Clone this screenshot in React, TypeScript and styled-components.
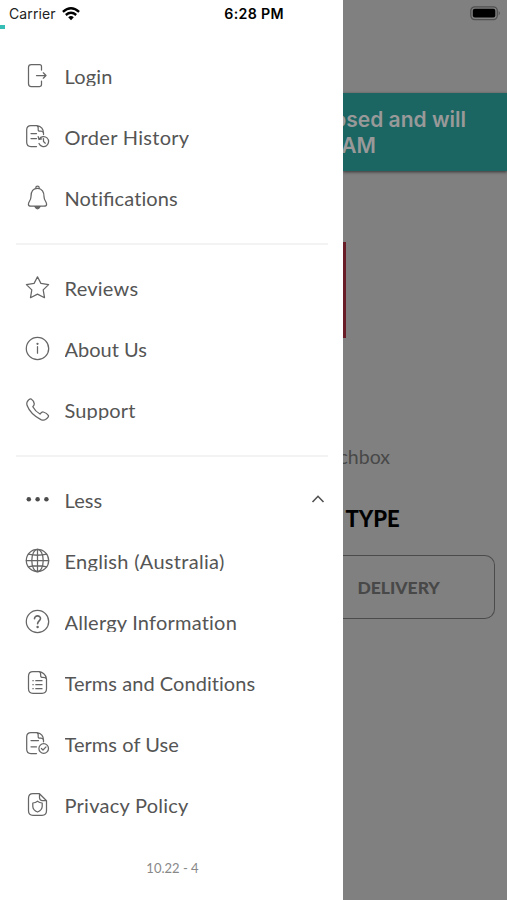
import React from "react";
import styled, { createGlobalStyle } from "styled-components";

const GlobalStyle = createGlobalStyle`
  * { box-sizing: border-box; }
  body { margin: 0; background: #fff; }
`;

const Screen = styled.div`
  display: flex;
  width: 507px;
  height: 900px;
  overflow: hidden;
  font-family: Lato, sans-serif;
`;

const Drawer = styled.aside`
  width: 343px;
  height: 900px;
  background: #fff;
  display: flex;
  flex-direction: column;
  flex: none;
`;

const StatusBar = styled.header`
  height: 25px;
  display: flex;
  align-items: center;
  padding: 3px 0 0 9px;
  font-family: Inter, sans-serif;
  line-height: 20px;
  color: #222;
`;

const Carrier = styled.span`
  width: 53px;
  font-size: 14px;
  letter-spacing: 0.1px;
`;

const Clock = styled.span`
  margin-left: auto;
  margin-right: 59px;
  font-weight: 600;
  font-size: 14.2px;
  letter-spacing: 0.35px;
  color: #000;
  white-space: nowrap;
`;

const Progress = styled.div`
  width: 4.5px;
  height: 4px;
  background: #36bdb5;
`;

const Menu = styled.nav`
  padding-top: 16px;
`;

const Row = styled.div`
  height: 61.1px;
  display: flex;
  align-items: center;
  padding: 0 17px 0 25px;
`;

const Glyph = styled.svg`
  width: 25px;
  height: 25px;
  flex: none;
  fill: none;
  stroke: #666;
  stroke-width: 1.25;
  stroke-linecap: round;
  stroke-linejoin: round;
`;

const Label = styled.span<{ $clip?: boolean; $tracking: number }>`
  margin-left: 14.5px;
  font-size: 20px;
  line-height: 24px;
  height: ${(p) => (p.$clip ? "22px" : "26px")};
  margin-top: ${(p) => (p.$clip ? "-1px" : "3px")};
  letter-spacing: ${(p) => p.$tracking}px;
  overflow: hidden;
  white-space: nowrap;
  color: #555;
`;

const Ligature = styled.span`
  letter-spacing: 0;
`;

const Chevron = styled.svg`
  width: 14px;
  height: 10px;
  margin-left: auto;
  margin-right: 1px;
  fill: none;
  stroke: #505050;
  stroke-width: 1.6;
`;

const Divider = styled.hr`
  height: 2px;
  margin: 14.7px 15px 12px 16px;
  border: 0;
  background: #f3f3f3;
`;

const Version = styled.footer`
  margin-top: 23px;
  padding-left: 2px;
  text-align: center;
  font-size: 13px;
  line-height: 18px;
  color: #888;
`;

const Page = styled.main`
  width: 164px;
  height: 900px;
  background: #808080;
  display: flex;
  flex-direction: column;
  overflow: hidden;
`;

const PageStatus = styled.div`
  height: 93px;
  display: flex;
  justify-content: flex-end;
  padding: 6px 6px 0 0;
`;

const Banner = styled.div`
  height: 78px;
  flex: none;
  padding: 14px 41px 0 0;
  background: #1b6663;
  box-shadow: 0 1px 3px rgba(0, 0, 0, 0.6);
  display: flex;
  flex-direction: column;
  align-items: flex-end;
  font-family: Inter, sans-serif;
  font-size: 21px;
  font-weight: 600;
  line-height: 26px;
  color: #999;
  white-space: nowrap;
`;

const BannerEnd = styled.span`
  margin-right: 90px;
`;

const LogoEdge = styled.div`
  width: 3px;
  height: 96px;
  margin-top: 71px;
  flex: none;
  background: #681c26;
`;

const StoreName = styled.div`
  display: flex;
  justify-content: flex-end;
  margin-top: 106px;
  padding-right: 117px;
  font-size: 19.5px;
  line-height: 26px;
  color: #484848;
`;

const Heading = styled.h2`
  margin: 34px 0 0 2.5px;
  font-size: 22px;
  font-weight: 900;
  line-height: 30px;
  color: #000;
`;

const DeliveryButton = styled.button`
  width: 152px;
  height: 64px;
  margin-top: 21px;
  padding: 0 0 0 14.5px;
  border: 1.5px solid #4b4b4b;
  border-left: 0;
  border-radius: 0 10px 10px 0;
  background: transparent;
  text-align: left;
  font: 900 17.5px Lato, sans-serif;
  color: #484848;
`;

type IconName = "login" | "history" | "bell" | "star" | "info" | "phone" | "more" | "globe" | "help" | "terms" | "use" | "privacy";

const icons: Record<IconName, React.ReactNode> = {
  login: <path d="M16.5 7V3.4Q16.5 1.5 14.6 1.5H6.3Q3.5 1.5 3.5 4.3V20.7Q3.5 23.5 6.3 23.5H14.6Q16.5 23.5 16.5 21.6V18M11.5 12.5H21M18.3 9.8L21 12.5L18.3 15.2" />,
  history: (
    <>
      <path d="M11.5 22.5H6Q1.7 22.5 1.7 18.2V5.8Q1.7 1.5 6 1.5H12Q18.5 3 18.5 9V10.5M12 1.7Q13.7 3 13.2 5.2Q12.8 7.4 15.3 7.2Q17.8 7 18.5 9M6 9.5H11.5M6 14.5H11.5" />
      <path d="M14.3 15A5 5 0 1 1 14 19.5M13.2 12.7L14 15.5L16.8 14.8M18.5 14.6V17.5L20.3 19.2" />
    </>
  ),
  bell: (
    <>
      <path d="M10.8 3.6V2.8A1.7 1.7 0 0 1 14.2 2.8V3.6M12.5 3.3C7.8 3.3 6 7.2 6 11.4C6 15.5 3.4 16.6 3.4 19.2Q3.4 21.2 6 21.2H19Q21.6 21.2 21.6 19.2C21.6 16.6 19 15.5 19 11.4C19 7.2 17.2 3.3 12.5 3.3Z" />
      <path d="M9.8 21.5Q12.5 26 15.2 21.5Z" fill="#666" />
    </>
  ),
  star: <path d="M12.5 1.8L15.9 8.4L23.6 9.6L18.2 14.9L19.5 22.7L12.5 19.1L5.5 22.7L6.8 14.9L1.4 9.6L9.1 8.4Z" />,
  info: (
    <>
      <circle cx="12.5" cy="12.5" r="11.2" />
      <path d="M12.5 10.7V17.2" />
      <circle cx="12.5" cy="7.8" r=".5" fill="#666" />
    </>
  ),
  phone: <path d="M2 5.2Q4 1.5 6.2 2Q8.7 3.6 9.3 6.8Q9.3 8.3 7.8 9.8C9 12 12.4 15.7 15 17Q17 14.7 18.3 15Q21.8 15.8 23.5 18.6Q24 20 20.5 22.6Q18.8 23.8 15.9 22.6C9.5 19.5 4.2 14 2.1 8.6Q1.5 6.6 2 5.2Z" />,
  more: (
    <g fill="#4c4c4c" stroke="none">
      <circle cx="3.8" cy="12.3" r="2.25" />
      <circle cx="12.6" cy="12.3" r="2.25" />
      <circle cx="21.4" cy="12.3" r="2.25" />
    </g>
  ),
  globe: (
    <>
      <circle cx="12.5" cy="12.5" r="11.2" />
      <ellipse cx="12.5" cy="12.5" rx="5.7" ry="11.2" />
      <path d="M12.5 1.3V23.7M1.3 12.5H23.7M3.3 6.2Q12.5 8.3 21.7 6.2M3.3 18.8Q12.5 16.7 21.7 18.8" />
    </>
  ),
  help: (
    <>
      <circle cx="12.5" cy="12.5" r="11.2" />
      <path strokeWidth="1.6" d="M9.5 9.7C9.5 5.9 15.6 6.1 15.5 9.6C15.4 12 12.6 12 12.6 14.8" />
      <circle cx="12.6" cy="18" r=".6" fill="#666" />
    </>
  ),
  terms: (
    <>
      <path d="M14.5 1.7H8Q3.5 1.7 3.5 6.2V18.8Q3.5 23.3 8 23.3H17Q21.5 23.3 21.5 18.8V9Q21.3 6 18.8 3.8Q16.8 2 14.5 1.7ZM14.5 1.7Q16 3 15.7 5.5Q15.5 7.5 18 7.4Q20.8 7.4 21.5 9" />
      <path d="M10.8 10.7H17M10.8 14.7H17M10.8 18.7H17M7.9 10.7H8.2M7.9 14.7H8.2M7.9 18.7H8.2" />
    </>
  ),
  use: (
    <>
      <path d="M11.5 22.5H6Q1.7 22.5 1.7 18.2V5.8Q1.7 1.5 6 1.5H12Q18.5 3 18.5 9V10.8M12 1.7Q13.7 3 13.2 5.2Q12.8 7.4 15.3 7.2Q17.8 7 18.5 9M6 9.5H13.5M6 15.8H11.5" />
      <circle cx="18.7" cy="17.5" r="4.8" />
      <path d="M16.4 17.5L18 19L21 15.9" />
    </>
  ),
  privacy: (
    <>
      <path d="M14.5 1.7H8Q3.5 1.7 3.5 6.2V18.8Q3.5 23.3 8 23.3H17Q21.5 23.3 21.5 18.8V8.8L14.5 1.7V5.8Q14.7 8.5 17.4 8.7H21.5" />
      <path d="M12.5 9.2Q14.5 10.8 17.2 11V14.5Q17 18.3 12.5 20Q8 18.3 7.8 14.5V11Q10.5 10.8 12.5 9.2Z" />
    </>
  ),
};

interface ItemProps {
  icon: IconName;
  label: React.ReactNode;
  tracking?: number;
  clip?: boolean;
  expanded?: boolean;
}

const Item = ({ icon, label, tracking = 0, clip, expanded }: ItemProps) => (
  <Row>
    <Glyph viewBox="0 0 25 25">{icons[icon]}</Glyph>
    <Label $clip={clip} $tracking={tracking}>{label}</Label>
    {expanded && (
      <Chevron viewBox="0 0 14 10">
        <path d="M1.5 8L7 2.3L12.5 8" />
      </Chevron>
    )}
  </Row>
);

export default function App() {
  return (
    <>
      <GlobalStyle />
      <Screen>
        <Drawer>
          <StatusBar>
            <Carrier>Carrier</Carrier>
            <svg width="18" height="14" viewBox="0 0 18 14" fill="none" stroke="#000" strokeWidth="2.4">
              <path d="M.9 4.8Q9-2.1 17.1 4.8M3.8 8Q9 3.7 14.2 8" />
              <path d="M6.2 10.2Q9 8 11.8 10.2L9 13.2Z" fill="#000" stroke="none" />
            </svg>
            <Clock>6:28 PM</Clock>
          </StatusBar>
          <Progress />
          <Menu>
            <Item icon="login" label="Login" tracking={0.15} clip />
            <Item icon="history" label="Order History" tracking={0.3} />
            <Item icon="bell" label={<>Noti<Ligature>fi</Ligature>cations</>} tracking={0.12} />
            <Divider />
            <Item icon="star" label="Reviews" tracking={0.25} />
            <Item icon="info" label="About Us" />
            <Item icon="phone" label="Support" tracking={0.15} clip />
            <Divider />
            <Item icon="more" label="Less" tracking={0.1} expanded />
            <Item icon="globe" label="English (Australia)" tracking={0.3} clip />
            <Item icon="help" label="Allergy Information" tracking={0.22} clip />
            <Item icon="terms" label="Terms and Conditions" tracking={0.05} />
            <Item icon="use" label="Terms of Use" tracking={0.05} />
            <Item icon="privacy" label="Privacy Policy" tracking={0.25} />
          </Menu>
          <Version>10.22 - 4</Version>
        </Drawer>
        <Page>
          <PageStatus>
            <svg width="31" height="15" viewBox="0 0 31 15">
              <rect x=".8" y=".8" width="26.5" height="12.8" rx="4" fill="none" stroke="#505050" strokeWidth="1.3" />
              <rect x="2.8" y="2.8" width="22.5" height="8.8" rx="2" />
              <path d="M28.7 5Q31 7.2 28.7 9.4Z" fill="#505050" />
            </svg>
          </PageStatus>
          <Banner>
            <span>osed and will</span>
            <BannerEnd>AM</BannerEnd>
          </Banner>
          <LogoEdge />
          <StoreName>chbox</StoreName>
          <Heading>TYPE</Heading>
          <DeliveryButton>DELIVERY</DeliveryButton>
        </Page>
      </Screen>
    </>
  );
}
